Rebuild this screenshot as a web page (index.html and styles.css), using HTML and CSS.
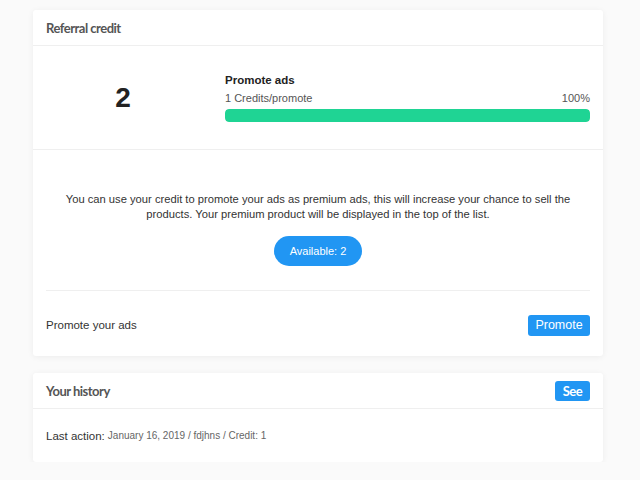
FILE: index.html
```html
<!DOCTYPE html>
<html>
<head>
<meta charset="utf-8">
<link rel="stylesheet" href="styles.css">
</head>
<body>
<div class="wrap">
  <section class="card">
    <header class="card-head"><h2 class="card-title">Referral credit</h2></header>
    <div class="stats">
      <div class="count">2</div>
      <div class="promo">
        <div class="promo-title">Promote ads</div>
        <div class="promo-meta"><span>1 Credits/promote</span><span>100%</span></div>
        <div class="bar"><div class="bar-fill" style="width:100%"></div></div>
      </div>
    </div>
    <div class="info">
      <p class="info-text">You can use your credit to promote your ads as premium ads, this will increase your chance to sell the products. Your premium product will be displayed in the top of the list.</p>
      <button class="pill">Available: 2</button>
      <div class="action-row">
        <span class="action-label">Promote your ads</span>
        <button class="btn">Promote</button>
      </div>
    </div>
  </section>
  <section class="card">
    <header class="card-head head-flex"><h2 class="card-title">Your history</h2><button class="btn btn-sm">See</button></header>
    <div class="history"><span class="hl">Last action:</span> <span class="hv">January 16, 2019 / fdjhns / Credit: 1</span></div>
  </section>
</div>
</body>
</html>
```
FILE: styles.css
```css
* { box-sizing: border-box; }
html, body { margin: 0; padding: 0; background: #fafafa; }
body { font-family: "Liberation Sans", Arial, sans-serif; color: #333; }
.wrap { width: 570px; margin-left: 33px; padding-top: 10px; display: flex; flex-direction: column; gap: 17px; }
.card { background: #fff; border-radius: 3px; box-shadow: 0 1px 6px rgba(0,0,0,0.06); }
.card-head { height: 36px; padding: 0 13px; border-bottom: 1px solid #efefef; display: flex; align-items: center; }
.head-flex { justify-content: space-between; }
.card-title { margin: 0; font-family: Lato, sans-serif; font-weight: 700; font-size: 13px; color: #555; letter-spacing: -0.5px; }
.stats { display: grid; grid-template-columns: 154px 1fr; column-gap: 25px; padding: 0 13px; height: 104px; align-items: center; border-bottom: 1px solid #efefef; }
.count { text-align: center; font-size: 28px; font-weight: 700; color: #222; }
.promo { padding-bottom: 1px; }
.promo-title { font-size: 11.5px; font-weight: 700; color: #222; line-height: 16px; }
.promo-meta { display: flex; justify-content: space-between; font-size: 11px; color: #555; line-height: 16px; margin-top: 2px; }
.bar { height: 13px; background: #eee; border-radius: 4px; margin-top: 3px; overflow: hidden; }
.bar-fill { height: 100%; background: #1fd494; border-radius: 4px; }
.info { padding: 42px 13px 0; display: flex; flex-direction: column; align-items: center; }
.info-text { margin: 0; font-size: 11.2px; line-height: 15px; text-align: center; color: #333; padding: 0 8px; }
.pill { margin-top: 14px; width: 88px; height: 30px; border: 0; border-radius: 15px; background: #2196f3; color: #fff; font-family: "Liberation Sans", Arial, sans-serif; font-size: 11px; padding: 0; }
.action-row { align-self: stretch; margin-top: 24px; border-top: 1px solid #efefef; height: 66px; padding-top: 3px; display: flex; align-items: center; justify-content: space-between; }
.action-label { font-size: 11.5px; color: #333; }
.btn { border: 0; background: #2196f3; color: #fff; font-family: "Liberation Sans", Arial, sans-serif; font-size: 12.5px; height: 21px; width: 62px; border-radius: 3px; padding: 0; }
.btn-sm { width: 35px; height: 20px; font-family: Lato, sans-serif; font-weight: 700; font-size: 13px; letter-spacing: -0.5px; }
.history { height: 53px; padding: 0 13px; display: flex; align-items: center; gap: 3px; }
.hl { font-size: 11.5px; color: #333; }
.hv { font-size: 10px; color: #666; }
```
